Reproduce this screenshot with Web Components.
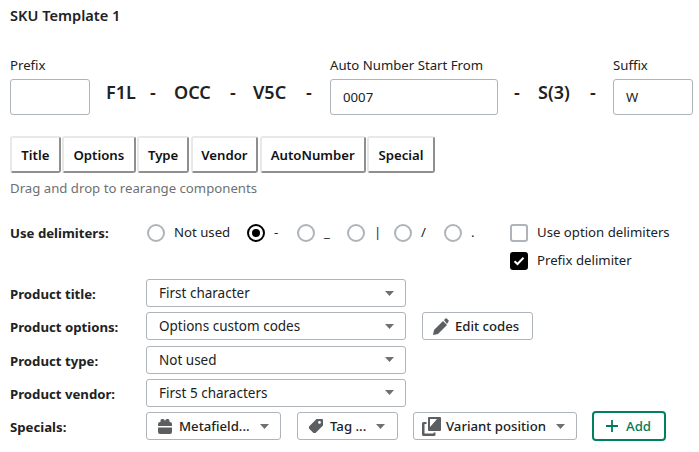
<!DOCTYPE html>
<html><head><meta charset="utf-8"><style>
html,body{margin:0;padding:0;background:#fff}
body{--fs:13.2px;font:13.2px/18px "Noto Sans","Open Sans",sans-serif;color:#202223;width:699px;height:452px;overflow:hidden}
</style></head><body>
<sku-form></sku-form>
<script>
const def=(n,css,html)=>{customElements.define(n,class extends HTMLElement{constructor(){super();this.attachShadow({mode:'open'}).innerHTML=`<style>${css}</style>${html}`;}});};
const caret=`<svg width="9" height="5" viewBox="0 0 9 5"><path d="M0 0h9L4.500 5z" fill="#6d7175"/></svg>`;
customElements.define('sku-input',class extends HTMLElement{constructor(){super();const s=this.attachShadow({mode:'open'});const l=this.getAttribute('label'),v=this.getAttribute('value')||'';s.innerHTML=`<style>:host{display:block;width:${this.getAttribute('w')}px;flex:none}
.l{height:18px;margin-bottom:5px;font-size:var(--fs);line-height:18px;color:#202223;white-space:nowrap}
.b{box-sizing:border-box;height:36px;border:1px solid #aeb4b9;border-radius:3px;padding:0 12px;display:flex;align-items:center;font-size:var(--fs)}</style><div class="l">${l}</div><div class="b">${v}</div>`;}});
def('sku-token',`:host{display:block;flex:none;font-size:18px;font-weight:600;line-height:22px;color:#202223;margin-top:25px;white-space:nowrap}`,`<slot></slot>`);
def('sku-tab',`:host{display:flex;box-sizing:border-box;height:37px;align-items:center;justify-content:center;border:2px solid;border-color:#e8e8e8 #8f8f8f #8f8f8f #e8e8e8;border-radius:3px;font-size:var(--fs);font-weight:600;color:#111;white-space:nowrap}`,`<slot></slot>`);
customElements.define('sku-radio',class extends HTMLElement{constructor(){super();const s=this.attachShadow({mode:'open'});const c=this.hasAttribute('checked');s.innerHTML=`<style>:host{display:flex;align-items:center;flex:none;font-size:var(--fs);color:#202223}
i{display:flex;align-items:center;justify-content:center;box-sizing:border-box;width:18px;height:18px;border-radius:50%;border:${c?'2px solid #000':'2px solid #aeb4b9'};margin-right:9px}
b{display:block;width:8px;height:8px;background:#000;border-radius:50%}
span{padding-bottom:2px}</style><i>${c?'<b></b>':''}</i><span><slot></slot></span>`;}});
customElements.define('sku-check',class extends HTMLElement{constructor(){super();const s=this.attachShadow({mode:'open'});const c=this.hasAttribute('checked');s.innerHTML=`<style>:host{display:flex;align-items:center;height:18px;font-size:var(--fs);color:#202223}
i{display:flex;align-items:center;justify-content:center;box-sizing:border-box;width:18px;height:18px;border-radius:3px;border:2px solid ${c?'#000':'#aeb4b9'};background:${c?'#000':'#fff'};margin-right:9px}
span{padding-bottom:2px}</style><i>${c?'<svg width="12" height="10" viewBox="0 0 12 10"><path d="M1.500 5.200 4.500 8 10.500 1.800" fill="none" stroke="#fff" stroke-width="2"/></svg>':''}</i><span><slot></slot></span>`;}});
customElements.define('sku-select',class extends HTMLElement{constructor(){super();const s=this.attachShadow({mode:'open'});s.innerHTML=`<style>:host{display:flex;box-sizing:border-box;width:260px;height:28px;border:1px solid #aeb4b9;border-radius:3px;align-items:center;justify-content:space-between;padding:0 11px 0 12px;font-size:13.5px;color:#202223;flex:none}</style><span><slot></slot></span>${caret}`;}});
customElements.define('sku-button',class extends HTMLElement{constructor(){super();const s=this.attachShadow({mode:'open'});const g=this.hasAttribute('green');const hasCaret=this.hasAttribute('caret');s.innerHTML=`<style>:host{display:flex;box-sizing:border-box;height:${g?30:28}px;width:${this.getAttribute('w')}px;flex:none;border:${g?'2px solid #008060':'1px solid #aeb4b9'};border-radius:${g?4:3}px;align-items:center;padding-left:${this.getAttribute('pl')}px;font-size:var(--fs);font-weight:500;color:${g?'#007a5c':'#202223'};white-space:nowrap}
::slotted(svg){flex:none;margin-right:${this.getAttribute('ig')||6}px}
svg.c{margin-left:10px}</style><slot name="i"></slot><slot></slot>${hasCaret?caret.replace('<svg','<svg class="c"'):''}`;}});
def('sku-row',`:host{display:flex;align-items:center;height:28px;flex:none}
.k{width:136px;flex:none;font-size:var(--fs);font-weight:700;color:#202223;padding-top:2px;white-space:nowrap}`,`<div class="k"><slot name="k"></slot></div><slot></slot>`);
def('sku-form',`:host{display:block;box-sizing:border-box;padding:5px 6px 0 10px;width:699px;height:452px}
h2{margin:0;font-size:14.600px;font-weight:600;line-height:20px;color:#202223}
.top{display:flex;margin-top:31px;height:59px}
.tabs{display:flex;gap:1.300px;margin-top:21px}
.help{font-size:var(--fs);color:#6d7175;height:18px;line-height:18px;margin-top:6px}
.delim{display:flex;height:46px;margin-top:27px}
.lbl{width:137px;flex:none;font-size:var(--fs);font-weight:700;height:18px;line-height:18px}
.rad{display:flex;height:18px;flex:none}
.chk{display:flex;flex-direction:column;gap:10px;margin-left:30px}
.rows{display:flex;flex-direction:column;margin-top:9px}
.rows sku-row{margin-bottom:5.330px}
`,`<h2>SKU Template 1</h2>
<div class="top">
<sku-input label="Prefix" w="80"></sku-input>
<sku-token style="margin-left:16px;width:44px">F1L</sku-token><sku-token style="width:24px">-</sku-token><sku-token style="width:56px">OCC</sku-token><sku-token style="width:23px">-</sku-token><sku-token style="width:53px">V5C</sku-token><sku-token style="width:24px">-</sku-token>
<sku-input label="Auto Number Start From" value="0007" w="168"></sku-input>
<sku-token style="margin-left:16px;width:24px">-</sku-token><sku-token style="width:52px">S(3)</sku-token><sku-token style="width:23px">-</sku-token>
<sku-input label="Suffix" value="W" w="80"></sku-input>
</div>
<div class="tabs"><sku-tab style="width:50.700px">Title</sku-tab><sku-tab style="width:73.700px">Options</sku-tab><sku-tab style="width:52.300px">Type</sku-tab><sku-tab style="width:67.700px">Vendor</sku-tab><sku-tab style="width:106.300px">AutoNumber</sku-tab><sku-tab style="width:67.700px">Special</sku-tab></div>
<div class="help">Drag and drop to rearange components</div>
<div class="delim"><div class="lbl">Use delimiters:</div>
<div class="rad"><sku-radio style="width:100px">Not used</sku-radio><sku-radio checked style="width:50px">-</sku-radio><sku-radio style="width:50px">_</sku-radio><sku-radio style="width:47px">|</sku-radio><sku-radio style="width:50px">/</sku-radio><sku-radio style="width:36px">.</sku-radio></div>
<div class="chk"><sku-check>Use option delimiters</sku-check><sku-check checked>Prefix delimiter</sku-check></div></div>
<div class="rows">
<sku-row><span slot="k">Product title:</span><sku-select>First character</sku-select></sku-row>
<sku-row><span slot="k">Product options:</span><sku-select>Options custom codes</sku-select>
<sku-button w="111" pl="10" style="margin-left:16px" ig="6"><svg slot="i" width="16" height="17" viewBox="0 0 16 17"><path d="M0 17l1-5L10 3l4 4-9 9z" fill="#5c5f62"/><path d="M11 2l1.500-1.500q.6-.6 1.200 0l1.800 1.800q.6.6 0 1.200L14 6z" fill="#5c5f62"/></svg>Edit codes</sku-button></sku-row>
<sku-row><span slot="k">Product type:</span><sku-select>Not used</sku-select></sku-row>
<sku-row><span slot="k">Product vendor:</span><sku-select>First 5 characters</sku-select></sku-row>
<sku-row><span slot="k">Specials:</span>
<sku-button w="135" pl="11" caret ig="7"><svg slot="i" width="14" height="15" viewBox="0 0 14 15"><path d="M0 7V5q0-2 2-2h.5V1.500Q2.500 0 4 0h1q1 0 1.500 1L7 2l.5-1Q8 0 9 0h1q1.500 0 1.500 1.500V3h.5q2 0 2 2v2zM0 8.500h14V13q0 2-2 2H2q-2 0-2-2z" fill="#5c5f62"/></svg>Metafield...</sku-button>
<sku-button w="101" pl="11" caret style="margin-left:16px" ig="7"><svg slot="i" width="14" height="14" viewBox="0 0 14 14"><path d="M7.500 0H13a1 1 0 0 1 1 1v5.500L6.500 14a1.400 1.400 0 0 1-2 0L0 9.500a1.400 1.400 0 0 1 0-2zM10.500 2a1.400 1.400 0 1 0 0 2.800 1.400 1.400 0 0 0 0-2.800z" fill="#5c5f62" fill-rule="evenodd"/></svg>Tag ...</sku-button>
<sku-button w="164" pl="8" caret style="margin-left:15px" ig="5"><svg slot="i" width="19" height="19" viewBox="0 0 19 19"><path d="M6 1a1 1 0 0 1 1-1h11a1 1 0 0 1 1 1v12a1 1 0 0 1-1 1H7a1 1 0 0 1-1-1zM8 2v8l7-8z" fill="#5c5f62" fill-rule="evenodd"/><path d="M1.500 5H4.500v2H2.500v9.500h9V15.500h2V17.500a1.500 1.500 0 0 1-1.500 1.500H1.500A1.500 1.500 0 0 1 0 17.500V6.500A1.500 1.500 0 0 1 1.500 5z" fill="#5c5f62"/></svg>Variant position</sku-button>
<sku-button w="74" pl="12" green style="margin-left:15px" ig="8"><svg slot="i" width="12" height="12" viewBox="0 0 12 12"><path d="M6 0v12M0 6h12" stroke="#007a5c" stroke-width="1.800" fill="none"/></svg>Add</sku-button>
</sku-row>
</div>`);
</script>
</body></html>
